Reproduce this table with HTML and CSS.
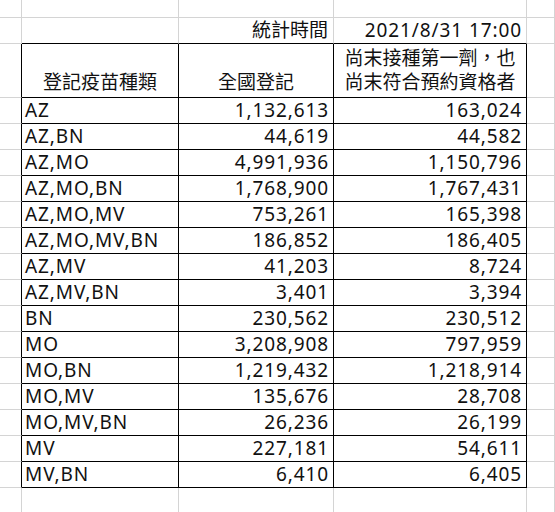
FILE: index.html
```html
<!DOCTYPE html>
<html lang="zh-Hant">
<head>
  <meta charset="UTF-8">
  <meta name="viewport" content="width=device-width, initial-scale=1.0">
  <title>登記疫苗種類</title>
  <link rel="stylesheet" href="styles.css">
</head>
<body>
  <div class="sheet">
    <div class="row">
      <div class="cell"></div><div class="cell"></div><div class="cell"></div><div class="cell"></div><div class="cell"></div>
    </div>
    <div class="row">
      <div class="cell"></div>
      <div class="cell top"></div>
      <div class="cell top right">統計時間</div>
      <div class="cell top num">2021/8/31 17:00</div>
      <div class="cell"></div>
    </div>
    <div class="row head">
      <div class="cell left"></div>
      <div class="cell box center">登記疫苗種類</div>
      <div class="cell box center">全國登記</div>
      <div class="cell box center">尚末接種第一劑，也<br>尚末符合預約資格者</div>
      <div class="cell"></div>
    </div>
    <div class="row"><div class="cell left"></div><div class="cell box name">AZ</div><div class="cell box num">1,132,613</div><div class="cell box num">163,024</div><div class="cell"></div></div>
    <div class="row"><div class="cell left"></div><div class="cell box name">AZ,BN</div><div class="cell box num">44,619</div><div class="cell box num">44,582</div><div class="cell"></div></div>
    <div class="row"><div class="cell left"></div><div class="cell box name">AZ,MO</div><div class="cell box num">4,991,936</div><div class="cell box num">1,150,796</div><div class="cell"></div></div>
    <div class="row"><div class="cell left"></div><div class="cell box name">AZ,MO,BN</div><div class="cell box num">1,768,900</div><div class="cell box num">1,767,431</div><div class="cell"></div></div>
    <div class="row"><div class="cell left"></div><div class="cell box name">AZ,MO,MV</div><div class="cell box num">753,261</div><div class="cell box num">165,398</div><div class="cell"></div></div>
    <div class="row"><div class="cell left"></div><div class="cell box name">AZ,MO,MV,BN</div><div class="cell box num">186,852</div><div class="cell box num">186,405</div><div class="cell"></div></div>
    <div class="row"><div class="cell left"></div><div class="cell box name">AZ,MV</div><div class="cell box num">41,203</div><div class="cell box num">8,724</div><div class="cell"></div></div>
    <div class="row"><div class="cell left"></div><div class="cell box name">AZ,MV,BN</div><div class="cell box num">3,401</div><div class="cell box num">3,394</div><div class="cell"></div></div>
    <div class="row"><div class="cell left"></div><div class="cell box name">BN</div><div class="cell box num">230,562</div><div class="cell box num">230,512</div><div class="cell"></div></div>
    <div class="row"><div class="cell left"></div><div class="cell box name">MO</div><div class="cell box num">3,208,908</div><div class="cell box num">797,959</div><div class="cell"></div></div>
    <div class="row"><div class="cell left"></div><div class="cell box name">MO,BN</div><div class="cell box num">1,219,432</div><div class="cell box num">1,218,914</div><div class="cell"></div></div>
    <div class="row"><div class="cell left"></div><div class="cell box name">MO,MV</div><div class="cell box num">135,676</div><div class="cell box num">28,708</div><div class="cell"></div></div>
    <div class="row"><div class="cell left"></div><div class="cell box name">MO,MV,BN</div><div class="cell box num">26,236</div><div class="cell box num">26,199</div><div class="cell"></div></div>
    <div class="row"><div class="cell left"></div><div class="cell box name">MV</div><div class="cell box num">227,181</div><div class="cell box num">54,611</div><div class="cell"></div></div>
    <div class="row"><div class="cell left"></div><div class="cell box name">MV,BN</div><div class="cell box num">6,410</div><div class="cell box num">6,405</div><div class="cell"></div></div>
    <div class="row">
      <div class="cell"></div><div class="cell"></div><div class="cell"></div><div class="cell"></div><div class="cell"></div>
    </div>
  </div>
</body>
</html>
```

FILE: styles.css
```css
* {
  margin: 0;
  padding: 0;
  box-sizing: border-box;
}

body {
  background-color: #fff;
  color: #111;
  font-family: "Noto Sans", "Noto Sans CJK TC", sans-serif;
  font-size: 19px;
  overflow: hidden;
}

.sheet {
  display: grid;
  grid-template-columns: 22px 157px 155px 193px 1fr;
  grid-template-rows: 18px 26px 54px repeat(15, 26px) 26px;
  width: 555px;
  height: 512px;
}

.row {
  display: contents;
}

.cell {
  display: flex;
  align-items: flex-end;
  padding: 0 5px 2px 3px;
  line-height: 22px;
  white-space: nowrap;
  border-right: 1px solid #d4d4d4;
  border-bottom: 1px solid #d4d4d4;
}

.cell.top {
  border-bottom-color: #000;
}

.cell.left {
  border-right-color: #000;
}

.cell.box {
  border-right-color: #000;
  border-bottom-color: #000;
}

/* latin text in the sheet runs wider than Noto Sans */
.cell.name,
.cell.num {
  letter-spacing: 0.9px;
}

.cell.num,
.cell.right {
  justify-content: flex-end;
}

.cell.num {
  padding-right: 4px;
}

.cell.center {
  justify-content: center;
  text-align: center;
  padding-left: 0;
  padding-right: 0;
}

.head .cell {
  line-height: 24px;
  padding-bottom: 3px;
}
```
